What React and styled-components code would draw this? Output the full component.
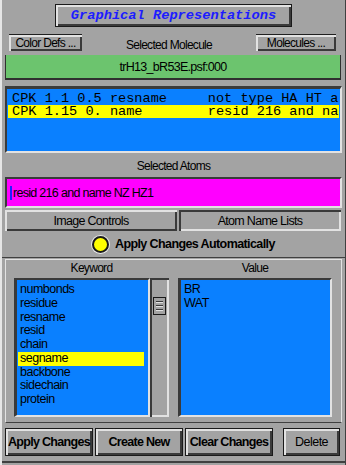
import React from "react";
import styled, { createGlobalStyle, css } from "styled-components";

const SANS = '"Liberation Sans", Arial, sans-serif';
const MONO = '"Liberation Mono", "DejaVu Sans Mono", monospace';

const GlobalStyle = createGlobalStyle`
  html, body {
    margin: 0;
    padding: 0;
    background: #a3a3a3;
  }
  * {
    box-sizing: border-box;
  }
`;

const raised = css`
  box-shadow: inset 2px 2px 0 #e2e2e2, inset -2px -2px 0 #3a3a3a;
`;

const sunken = css`
  box-shadow: inset 2px 2px 0 #3a3a3a, inset -2px -2px 0 #e2e2e2;
`;

const Window = styled.div`
  width: 346px;
  height: 465px;
  background: #a3a3a3;
  border-left: 2px solid #e6e6e6;
  border-right: 1px solid #404040;
  display: flex;
  flex-direction: column;
  font-family: ${SANS};
  font-size: 12px;
  letter-spacing: -0.7px;
  color: #000;
  overflow: hidden;
`;

const TitleButton = styled.div`
  margin: 4px 0 0 53px;
  width: 237px;
  height: 23px;
  border: 1px solid #1a1a1a;
  ${raised};
  display: flex;
  align-items: center;
  justify-content: center;
  font-family: ${MONO};
  font-weight: bold;
  font-style: italic;
  font-size: 13.7px;
  letter-spacing: 0;
  color: #1c1cff;
`;

const MolRow = styled.div`
  margin: 5px 9px 0 7px;
  height: 17px;
  display: grid;
  grid-template-columns: 73px 1fr 80px;
  align-items: center;
`;

const SmallButton = styled.div`
  height: 17px;
  border-top: 1px solid #202020;
  ${raised};
  display: flex;
  align-items: center;
  justify-content: center;
  line-height: 1;
`;

const CenterLabel = styled.div`
  text-align: center;
  padding-top: 6px;
`;

const MolField = styled.div`
  margin: 6px 4px 0 3px;
  height: 25px;
  background: #6cc46e;
  border-left: 1px solid #303030;
  border-bottom: 2px solid #303030;
  border-right: 1px solid #303030;
  display: flex;
  align-items: center;
  justify-content: center;
  font-size: 12.5px;
`;

const RepList = styled.div`
  margin: 6px 3px 0 3px;
  height: 67px;
  background: #0a80ff;
  border-top: 3px solid #3a3a3a;
  border-left: 2px solid #3a3a3a;
  border-right: 2px solid #e2e2e2;
  border-bottom: 2px solid #e2e2e2;
  padding: 3px 1px 0 1px;
  overflow: hidden;
`;

const RepRow = styled.div`
  height: 13px;
  line-height: 13px;
  padding-left: 4px;
  white-space: pre;
  overflow: hidden;
  font-family: ${MONO};
  font-size: 13.6px;
  letter-spacing: 0;
  background: ${(p) => (p.$selected ? "#ffff00" : "transparent")};
`;

const FieldLabel = styled.div`
  height: 24px;
  padding-top: 6px;
  text-align: center;
`;

const AtomField = styled.div`
  margin: 0 3px;
  height: 31px;
  background: #ff00ff;
  border-top: 2px solid #3a3a3a;
  border-left: 2px solid #3a3a3a;
  border-right: 2px solid #e2e2e2;
  border-bottom: 2px solid #e2e2e2;
  display: flex;
  align-items: center;
  padding-left: 3px;
  font-size: 12.5px;
`;

const Caret = styled.span`
  display: inline-block;
  width: 2px;
  height: 14px;
  background: #2020ff;
  margin-right: 1px;
`;

const TabRow = styled.div`
  margin: 2px 4px 0 3px;
  height: 21px;
  display: grid;
  grid-template-columns: 172px 1fr;
  gap: 2px;
`;

const Tab = styled.div`
  ${(p) => (p.$active ? sunken : raised)};
  display: flex;
  align-items: center;
  justify-content: center;
  font-size: 12.5px;
`;

const RadioRow = styled.div`
  height: 26px;
  display: flex;
  align-items: center;
  padding-left: 90px;
  gap: 6px;
`;

const RadioDot = styled.span`
  width: 17px;
  height: 17px;
  border-radius: 50%;
  background: #ffff00;
  border: 2px solid #1a1a1a;
  box-shadow: 0 0 0 1px #e8e8e8;
`;

const RadioText = styled.span`
  font-weight: bold;
  font-size: 12.5px;
  letter-spacing: -0.6px;
`;

const Separator = styled.div`
  height: 2px;
  border-top: 1px solid #404040;
`;

const ListFrame = styled.div`
  margin: 0 3px;
  height: 164px;
  border-top: 1px solid #e2e2e2;
  border-left: 1px solid #e2e2e2;
  border-right: 1px solid #e2e2e2;
  border-bottom: 1px solid #404040;
  display: flex;
`;

const Column = styled.div`
  width: ${(p) => p.$width}px;
  margin-left: ${(p) => p.$offset}px;
  display: flex;
  flex-direction: column;
`;

const ColumnHeader = styled.div`
  height: 18px;
  padding-top: 1px;
  text-align: center;
`;

const ListArea = styled.div`
  display: flex;
  padding-left: ${(p) => p.$pad || 0}px;
`;

const ListBox = styled.div`
  width: ${(p) => p.$width}px;
  height: 139px;
  background: #0a80ff;
  border-top: 2px solid #3a3a3a;
  border-left: 3px solid #3a3a3a;
  border-right: 2px solid #e2e2e2;
  border-bottom: 2px solid #e2e2e2;
  padding: 3px 1px 0 1px;
  overflow: hidden;
`;

const ListItem = styled.div`
  height: 13.75px;
  line-height: 13.75px;
  padding-left: 2px;
  font-size: 12.5px;
  letter-spacing: -0.5px;
  background: ${(p) => (p.$selected ? "#ffff00" : "transparent")};
  width: ${(p) => (p.$selected ? "126px" : "auto")};
`;

const ScrollTrack = styled.div`
  width: 19px;
  height: 139px;
  ${sunken};
  padding: 19px 3px 0 3px;
`;

const ScrollThumb = styled.div`
  height: 18px;
  border: 1px solid #1a1a1a;
  background: #a3a3a3;
  display: flex;
  flex-direction: column;
  justify-content: center;
  gap: 2px;
  padding: 0 2px;
`;

const Grip = styled.span`
  height: 2px;
  border-top: 1px solid #3a3a3a;
  border-bottom: 1px solid #e2e2e2;
`;

const ButtonRow = styled.div`
  margin: 5px 0 0 3px;
  height: 28px;
  display: flex;
`;

const ActionButton = styled.div`
  width: ${(p) => p.$width}px;
  margin-right: ${(p) => p.$gap || 0}px;
  height: 28px;
  border: 1px solid #1a1a1a;
  ${raised};
  display: flex;
  align-items: center;
  justify-content: center;
  white-space: nowrap;
  font-weight: ${(p) => (p.$bold ? "bold" : "normal")};
  font-size: 12.5px;
  letter-spacing: ${(p) => (p.$bold ? "-0.7px" : "-0.5px")};
`;

const BottomEdge = styled.div`
  margin-top: 5px;
  height: 2px;
  background: #404040;
`;

const keywords = [
  "numbonds",
  "residue",
  "resname",
  "resid",
  "chain",
  "segname",
  "backbone",
  "sidechain",
  "protein",
];

export default function App() {
  return (
    <>
      <GlobalStyle />
      <Window>
        <TitleButton>Graphical Representations</TitleButton>
        <MolRow>
          <SmallButton>Color Defs ...</SmallButton>
          <CenterLabel>Selected Molecule</CenterLabel>
          <SmallButton>Molecules ...</SmallButton>
        </MolRow>
        <MolField>trH13_bR53E.psf:000</MolField>
        <RepList>
          <RepRow>{"CPK 1.1 0.5 resname     not type HA HT a"}</RepRow>
          <RepRow $selected>{"CPK 1.15 0. name        resid 216 and na"}</RepRow>
        </RepList>
        <FieldLabel>Selected Atoms</FieldLabel>
        <AtomField>
          <Caret />
          resid 216 and name NZ HZ1
        </AtomField>
        <TabRow>
          <Tab>Image Controls</Tab>
          <Tab $active>Atom Name Lists</Tab>
        </TabRow>
        <RadioRow>
          <RadioDot />
          <RadioText>Apply Changes Automatically</RadioText>
        </RadioRow>
        <Separator />
        <ListFrame>
          <Column $width={171} $offset={0}>
            <ColumnHeader>Keyword</ColumnHeader>
            <ListArea $pad={8}>
              <ListBox $width={136}>
                {keywords.map((k) => (
                  <ListItem key={k} $selected={k === "segname"}>
                    {k}
                  </ListItem>
                ))}
              </ListBox>
              <ScrollTrack>
                <ScrollThumb>
                  <Grip />
                  <Grip />
                  <Grip />
                </ScrollThumb>
              </ScrollTrack>
            </ListArea>
          </Column>
          <Column $width={154} $offset={1}>
            <ColumnHeader>Value</ColumnHeader>
            <ListArea>
              <ListBox $width={154}>
                <ListItem>BR</ListItem>
                <ListItem>WAT</ListItem>
              </ListBox>
            </ListArea>
          </Column>
        </ListFrame>
        <ButtonRow>
          <ActionButton $width={88} $gap={2} $bold>
            Apply Changes
          </ActionButton>
          <ActionButton $width={88} $gap={2} $bold>
            Create New
          </ActionButton>
          <ActionButton $width={88} $gap={10} $bold>
            Clear Changes
          </ActionButton>
          <ActionButton $width={57}>Delete</ActionButton>
        </ButtonRow>
        <BottomEdge />
      </Window>
    </>
  );
}
